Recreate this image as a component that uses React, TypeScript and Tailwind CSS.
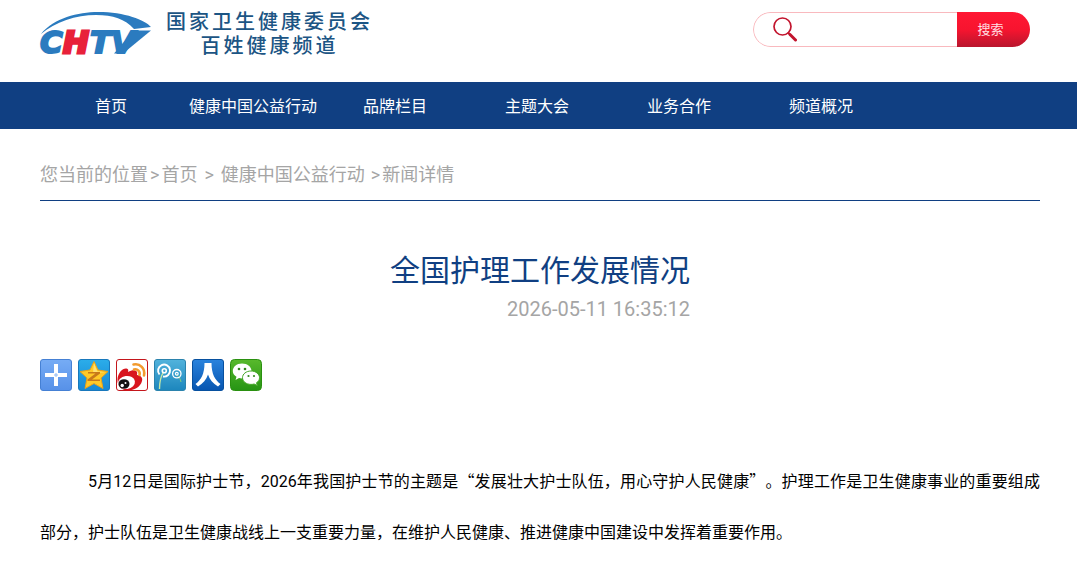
import type { ReactNode } from "react";

const navItems = [
  "首页",
  "健康中国公益行动",
  "品牌栏目",
  "主题大会",
  "业务合作",
  "频道概况",
];

function Logo() {
  return (
    <a href="#" className="flex items-start" aria-label="CHTV">
      <svg
        width="112"
        height="46"
        viewBox="0 0 112 46"
        className="overflow-visible"
        fontFamily="DejaVu Sans"
        fontWeight="700"
        fontStyle="italic"
        fontSize="31"
      >
        <path
          d="M1 24C14 8 38 2 58 2c27 0 47 8 53 15l-17 2C85 9 73 5 56 5 36 5 15 12 1 24z"
          fill="#2b7bbf"
        />
        <path d="M94 20.500h17L83 43.500h-9z" fill="#2b7bbf" />
        <g fill="#2b7bbf" stroke="#2b7bbf" strokeWidth="2">
          <text x="0" y="43">C</text>
          <text x="50" y="43">T</text>
          <text x="71" y="43">V</text>
        </g>
        <text x="23" y="43" fill="#e8213a" stroke="#e8213a" strokeWidth="3">
          H
        </text>
      </svg>
      <span className="ml-3.5 flex flex-col items-center text-[20px] leading-6 font-medium tracking-[3px] text-[#1c5584]">
        <span>国家卫生健康委员会</span>
        <span>百姓健康频道</span>
      </span>
    </a>
  );
}

function SearchBar() {
  return (
    <form
      className="mt-0.5 flex h-[35px] w-[277px] overflow-hidden rounded-full"
      onSubmit={(e) => e.preventDefault()}
    >
      <label className="flex min-w-0 flex-1 items-center rounded-l-full border border-r-0 border-[#f9b9be] pl-[19px]">
        <svg
          width="24"
          height="25"
          viewBox="0 0 24 25"
          fill="none"
          stroke="#c2142d"
          strokeLinecap="round"
        >
          <circle cx="9.500" cy="9.500" r="8.500" strokeWidth="1.700" />
          <path d="M15.500 16l1.500 1.500" strokeWidth="2" />
          <path d="M17 17.500l5.500 5.500" strokeWidth="3" />
        </svg>
        <input
          type="text"
          aria-label="搜索"
          className="ml-2 min-w-0 flex-1 text-sm outline-none"
        />
      </label>
      <button
        type="submit"
        className="w-[73px] bg-linear-to-b from-[#ff1733] via-[#f7142f] to-[#b9152d] pr-1.5 text-[13px] text-[#ffdfe2]"
      >
        搜索
      </button>
    </form>
  );
}

function ShareIcon({ label, children }: { label: string; children: ReactNode }) {
  return (
    <a href="#" aria-label={label}>
      <svg width="32" height="32" viewBox="0 0 32 32">
        {children}
      </svg>
    </a>
  );
}

function ShareBar() {
  return (
    <div className="mt-[33px] flex gap-1.5">
      <svg width="0" height="0" className="absolute">
        <defs>
          <linearGradient id="plus" x2="0" y2="1">
            <stop stopColor="#76acf5" />
            <stop offset="1" stopColor="#5791e8" />
          </linearGradient>
          <linearGradient id="sky" x2="0" y2="1">
            <stop stopColor="#2badea" />
            <stop offset="1" stopColor="#1787d3" />
          </linearGradient>
          <linearGradient id="teal" x2="0" y2="1">
            <stop stopColor="#52b3dc" />
            <stop offset="1" stopColor="#1c86bd" />
          </linearGradient>
          <linearGradient id="navy" x2="0" y2="1">
            <stop stopColor="#2a83dd" />
            <stop offset="1" stopColor="#0755b0" />
          </linearGradient>
          <linearGradient id="green" x2="0" y2="1">
            <stop stopColor="#58b92c" />
            <stop offset="1" stopColor="#269414" />
          </linearGradient>
        </defs>
      </svg>
      <ShareIcon label="分享">
        <rect x=".5" y=".5" width="31" height="31" rx="2.500" fill="url(#plus)" stroke="#4580d4" />
        <path d="M14 5h4v9h9v4h-9v9h-4v-9H5v-4h9z" fill="#fff" />
        <path d="M16 14v4M14 16h4" stroke="#8db8f4" />
      </ShareIcon>
      <ShareIcon label="QQ空间">
        <rect x=".5" y=".5" width="31" height="31" rx="2.500" fill="url(#sky)" stroke="#1878bc" />
        <path
          d="M16 2.500l4 8.500 10 1.500-7 6.500 2 10.500-9-5-9 5 2-10.500-7-6.500L12 11z"
          fill="#ffc928"
          stroke="#e9a21a"
          strokeLinejoin="round"
        />
        <path d="M16 4l3.200 8.300 7.800 1L15 14z" fill="#ffe274" />
        <path d="M10 13h12v1.500l-8 6h8V22H9.500v-1.500l8-6H10z" fill="#c7791a" />
      </ShareIcon>
      <ShareIcon label="新浪微博">
        <rect x=".5" y=".5" width="31" height="31" rx="2.500" fill="#fff" stroke="#c4161c" />
        <path
          d="M1.500 20c.5-6 5-11 9-10.500 2 .3 2 2 1.500 3.500 4-2.500 8-2.500 9 0 .5 1 0 2 0 3 4 .5 6 3 5 6-1.500 6-8 9.500-14 9.500S1 27 1.500 20z"
          fill="#d8151e"
        />
        <ellipse cx="10.500" cy="23.500" rx="8.500" ry="6.500" fill="#fff" transform="rotate(-8 10.500 23.500)" />
        <ellipse cx="8" cy="25" rx="5.500" ry="4.800" fill="#111" />
        <circle cx="6.200" cy="26.500" r="1.700" fill="#fff" />
        <circle cx="9.500" cy="24" r="1" fill="#fff" />
        <path
          d="M17.500 5.500c6.500-1.500 12 4 10.500 11M18 10.500c3.500-1 6.500 2 5.500 5.500"
          fill="none"
          stroke="#f29a2e"
          strokeWidth="2.600"
          strokeLinecap="round"
        />
      </ShareIcon>
      <ShareIcon label="腾讯微博">
        <rect x=".5" y=".5" width="31" height="31" rx="2.500" fill="url(#teal)" stroke="#2b83ad" />
        <path d="M9.500 13C7 17 5.500 22 5.500 30" fill="none" stroke="#c5e8a5" strokeWidth="1.400" />
        <path d="M23 16c2 2 3.500 4 4 7" fill="none" stroke="#83ce79" />
        <g fill="none" stroke="#fff">
          <path d="M5.500 15.500A6 6 0 1 1 9 17.500" strokeWidth="1.900" />
          <circle cx="10.300" cy="11.700" r="2" strokeWidth="1.600" />
          <circle cx="22.800" cy="14.700" r="4.200" strokeWidth="1.300" />
          <circle cx="22.800" cy="14.700" r="1.400" strokeWidth="1.200" />
        </g>
      </ShareIcon>
      <ShareIcon label="人人网">
        <rect x=".5" y=".5" width="31" height="31" rx="2.500" fill="url(#navy)" stroke="#07509f" />
        <path
          d="M12.500 4h7c0 11 3.500 17 9 21l-2.500 2.500c-5-3-8.500-7-10-12-1.500 5-5 9-10 12L3.500 25c5.500-4 9-10 9-21z"
          fill="#fff"
        />
      </ShareIcon>
      <ShareIcon label="微信">
        <rect x=".5" y=".5" width="31" height="31" rx="4" fill="url(#green)" stroke="#2a9010" />
        <path
          d="M12 4.500c5.500 0 9.500 3.500 9.500 7.500s-4 7.500-9.500 7.500c-1.200 0-2-.1-3-.4L5.500 21l1-3.300C4 16.300 2.800 14.300 2.800 12c0-4 3.700-7.500 9.200-7.500z"
          fill="#fff"
        />
        <path
          d="M21 12c4.800 0 8.500 3 8.500 6.700 0 2-1 3.800-3 5l.8 2.800-3.200-1.500c-1 .3-2 .4-3.100.4-4.800 0-8.500-3-8.500-6.700S16.200 12 21 12z"
          fill="#fff"
          stroke="#45a828"
        />
        <g fill="#33871f">
          <circle cx="9" cy="10" r="1.300" />
          <circle cx="15" cy="10" r="1.300" />
          <circle cx="18.500" cy="17" r="1.100" />
          <circle cx="24" cy="17" r="1.100" />
        </g>
      </ShareIcon>
    </div>
  );
}

export default function App() {
  return (
    <div className="min-h-screen bg-white font-['Roboto','Noto_Sans_CJK_SC',sans-serif] text-black">
      <header className="flex h-[82px] items-start justify-between pt-2.5 pr-[47px] pl-10">
        <Logo />
        <SearchBar />
      </header>

      <nav className="h-[47px] bg-[#103f82] pl-10">
        <ul className="flex">
          {navItems.map((item) => (
            <li key={item} className="w-[142px] text-center text-base leading-[49px] text-white">
              <a href="#" className="whitespace-nowrap">
                {item}
              </a>
            </li>
          ))}
        </ul>
      </nav>

      <main className="pr-[37px] pl-10">
        <div className="flex border-b border-[#103f82] pt-7 pb-[7px] text-lg leading-9 text-[#a5a5a5]">
          <span>您当前的位置</span>
          <span className="px-0.5">&gt;</span>
          <a href="#">首页</a>
          <span className="px-[7px]">&gt;</span>
          <a href="#">健康中国公益行动</a>
          <span className="pr-0.5 pl-1.5">&gt;</span>
          <span>新闻详情</span>
        </div>

        <div className="mt-12 flex justify-center">
          <div className="text-right">
            <h1 className="text-[30px] leading-[43px] text-[#103f82]">全国护理工作发展情况</h1>
            <p className="text-xl leading-[34px] text-[#a5a5a5]">2026-05-11 16:35:12</p>
          </div>
        </div>

        <ShareBar />

        <p className="mt-16 indent-12 text-base leading-[51px] text-justify [text-spacing-trim:space-all]">
          5月12日是国际护士节，2026年我国护士节的主题是
          <span className="font-['Noto_Sans_CJK_SC',sans-serif]">“发展壮大护士队伍，用心守护人民健康”</span>
          。护理工作是卫生健康事业的重要组成部分，护士队伍是卫生健康战线上一支重要力量，在维护人民健康、推进健康中国建设中发挥着重要作用。
        </p>
      </main>
    </div>
  );
}
